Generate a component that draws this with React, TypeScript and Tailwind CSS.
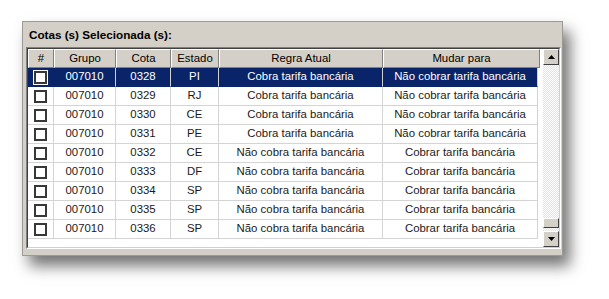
import React from "react";

const rows = [
  ["0328", "PI", "Cobra tarifa bancária", "Não cobrar tarifa bancária"],
  ["0329", "RJ", "Cobra tarifa bancária", "Não cobrar tarifa bancária"],
  ["0330", "CE", "Cobra tarifa bancária", "Não cobrar tarifa bancária"],
  ["0331", "PE", "Cobra tarifa bancária", "Não cobrar tarifa bancária"],
  ["0332", "CE", "Não cobra tarifa bancária", "Cobrar tarifa bancária"],
  ["0333", "DF", "Não cobra tarifa bancária", "Cobrar tarifa bancária"],
  ["0334", "SP", "Não cobra tarifa bancária", "Cobrar tarifa bancária"],
  ["0335", "SP", "Não cobra tarifa bancária", "Cobrar tarifa bancária"],
  ["0336", "SP", "Não cobra tarifa bancária", "Cobrar tarifa bancária"],
];

const widths = ["w-[26px]", "w-[62px]", "w-[55px]", "w-[48px]", "w-[164px]", "w-[155px]"];
const headers = ["#", "Grupo", "Cota", "Estado", "Regra Atual", "Mudar para"];

function Arrow({ up }: { up?: boolean }) {
  return (
    <svg width="7" height="4" viewBox="0 0 7 4">
      {up ? <polygon points="3.5,0 7,4 0,4" fill="#000" /> : <polygon points="0,0 7,0 3.5,4" fill="#000" />}
    </svg>
  );
}

function ScrollBtn({ up }: { up?: boolean }) {
  return (
    <div className="w-[16px] h-[16px] bg-[#d4d0c8] border-t border-l border-t-[#ffffff] border-l-[#ffffff] border-r border-b border-r-[#404040] border-b-[#404040] flex items-center justify-center">
      <Arrow up={up} />
    </div>
  );
}

export default function App() {
  return (
    <div className="w-[609px] h-[299px] bg-white pt-[21px] pl-[22px]" style={{ fontFamily: '"Liberation Sans", Arial, sans-serif' }}>
      <div className="w-[541px] h-[235px] bg-[#d4d0c8] border border-[#9c9a94] shadow-[7px_10px_14px_rgba(0,0,0,0.55)] flex flex-col">
        <div className="h-[25px] flex items-center pl-[6px] text-[11.7px] font-bold text-black">Cotas (s) Selecionada (s):</div>
        <div className="ml-[3px] w-[535px] h-[202px] border border-t-[#808080] border-l-[#808080] border-r-[#ffffff] border-b-[#ffffff]">
          <div className="w-full h-full border border-t-[#404040] border-l-[#404040] border-r-[#d4d0c8] border-b-[#d4d0c8] bg-white flex">
            <div className="flex-1 flex flex-col">
              <div className="flex h-[19px]">
                {headers.map((h, i) => (
                  <div key={h} className={`${widths[i]} ${i === 5 ? "w-[157px]" : ""} shrink-0 h-[19px] bg-[#d4d0c8] border-t border-l border-t-white border-l-white border-r border-b border-r-[#808080] border-b-[#808080] flex items-center justify-center text-[11.4px] text-black`}>
                    {h}
                  </div>
                ))}
              </div>
              {rows.map((r, ri) => {
                const sel = ri === 0;
                const bg = sel ? "bg-[#0a246a] text-white" : "text-[#1a1a1a]";
                return (
                  <div key={r[0]} className="flex h-[19px] text-[11.4px]">
                    <div className={`${widths[0]} shrink-0 border-r border-b ${bg} ${sel ? "border-[#0a246a]" : "border-[#d4d4d4]"} flex items-center justify-center`}>
                      <div className={`w-[13px] h-[13px] bg-white border-[2px] border-[#383838] ${sel ? "outline outline-1 outline-white" : ""}`} />
                    </div>
                    {["007010", r[0], r[1], r[2], r[3]].map((c, ci) => (
                      <div key={ci} className={`${widths[ci + 1]} shrink-0 border-r border-b ${bg} ${sel ? "border-r-[#d0d0d0] border-b-[#0a246a]" : "border-[#d4d4d4]"} flex items-center justify-center whitespace-nowrap`}>
                        {c}
                      </div>
                    ))}
                  </div>
                );
              })}
            </div>
            <div className="w-[16px] flex flex-col bg-[repeating-conic-gradient(#e4e2dc_0_25%,#ffffff_0_50%)] bg-[length:2px_2px]">
              <ScrollBtn up />
              <div className="flex-1 flex flex-col justify-end">
                <div className="h-[10px] bg-[#d4d0c8] border-t border-l border-t-white border-l-white border-r border-b border-r-[#404040] border-b-[#404040] mb-[3px]" />
              </div>
              <ScrollBtn />
            </div>
          </div>
        </div>
      </div>
    </div>
  );
}
